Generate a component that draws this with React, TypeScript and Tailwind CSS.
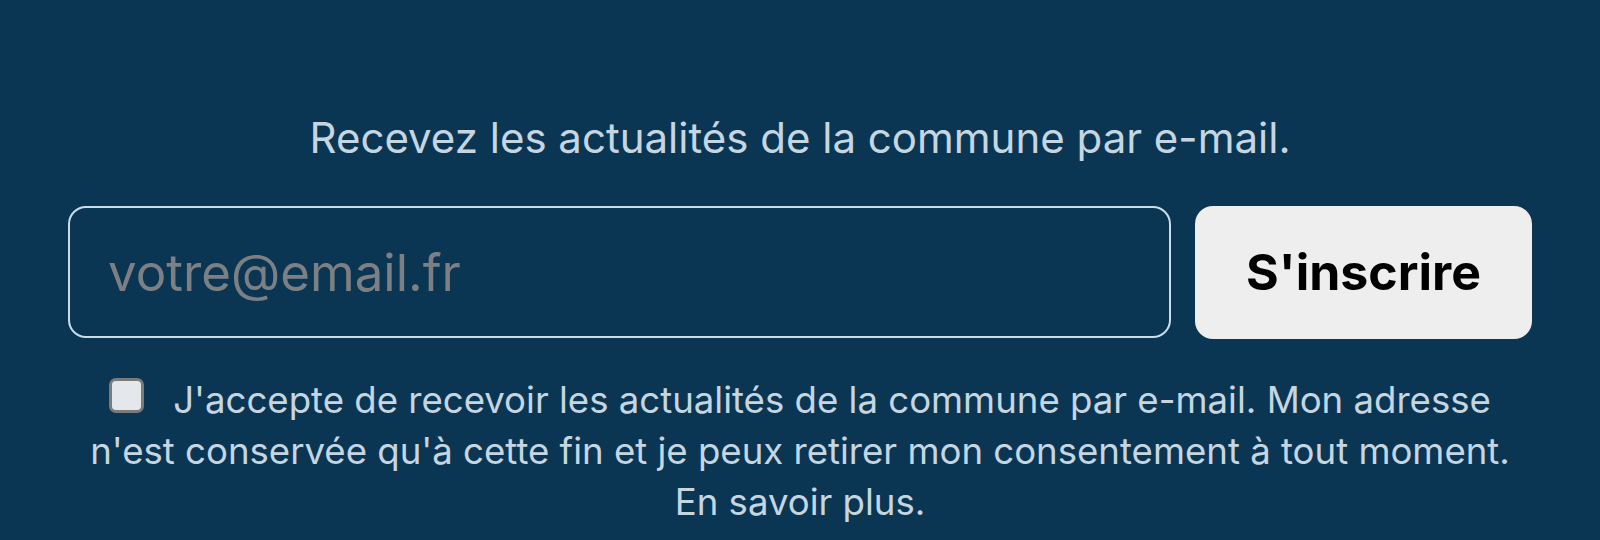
import { useState } from "react";

export default function App() {
  const [email, setEmail] = useState("");
  const [agreed, setAgreed] = useState(false);

  return (
    <div className="h-[540px] w-full bg-[#0b3653] font-['Inter',sans-serif] overflow-hidden">
      <div className="mx-auto w-[1464px] pt-[114px]">
        <p className="text-center text-[42px] leading-[48px] text-[#c6d6e1]">
          Recevez les actualités de la commune par e-mail.
        </p>

        <form className="mt-[44px] flex gap-[24px]" onSubmit={(e) => e.preventDefault()}>
          <input
            type="email"
            value={email}
            onChange={(e) => setEmail(e.target.value)}
            placeholder="votre@email.fr"
            className="h-[132px] flex-1 rounded-[18px] border-2 border-[#c9dce8] bg-transparent pl-[38px] text-[51px] text-white outline-none placeholder:text-[#7c8084]"
          />
          <button
            type="submit"
            className="h-[133px] w-[337px] shrink-0 rounded-[18px] bg-[#eeeeee] text-[50px] font-bold text-black"
          >
            S'inscrire
          </button>
        </form>

        <label className="mt-[36px] block px-[12px] text-center text-[36.6px] leading-[51px] text-[#c6d6e1]">
          <input
            type="checkbox"
            checked={agreed}
            onChange={(e) => setAgreed(e.target.checked)}
            className="mr-[29px] inline-block h-[35px] w-[35px] appearance-none rounded-[7px] border-[3px] border-[#7b7b7b] bg-[#e4e8ed] align-baseline"
          />
          J'accepte de recevoir les actualités de la commune par e-mail. Mon adresse n'est conservée
          qu'à cette fin et je peux retirer mon consentement à tout moment. En savoir plus.
        </label>
      </div>
    </div>
  );
}
